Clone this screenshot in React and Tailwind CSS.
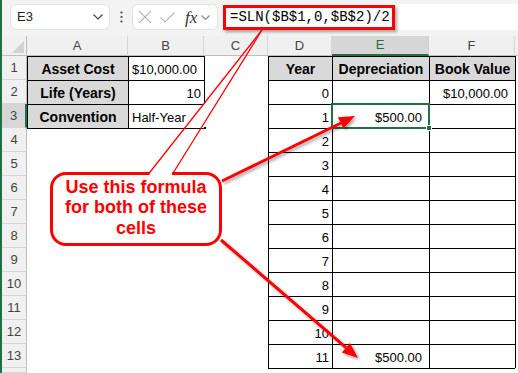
import React from 'react';

const COLS = ['A', 'B', 'C', 'D', 'E', 'F'];

const t1 = (r, c) => r >= 1 && r <= 3 && c >= 0 && c <= 1;
const t2 = (r, c) => r >= 1 && r <= 13 && c >= 3 && c <= 5;
const inT = (r, c) => t1(r, c) || t2(r, c);

const data = {
  '1-0': { v: 'Asset Cost', h: true },
  '2-0': { v: 'Life (Years)', h: true },
  '3-0': { v: 'Convention', h: true },
  '1-1': { v: '$10,000.00', a: 'cur' },
  '2-1': { v: '10', a: 'num' },
  '3-1': { v: 'Half-Year', a: 'left' },
  '1-3': { v: 'Year', h: true },
  '1-4': { v: 'Depreciation', h: true },
  '1-5': { v: 'Book Value', h: true },
  '2-5': { v: '$10,000.00', a: 'cur' },
  '3-4': { v: '$500.00', a: 'cur' },
  '13-4': { v: '$500.00', a: 'cur' },
};
for (let r = 2; r <= 13; r++) data[`${r}-3`] = { v: String(r - 2), a: 'num' };

function Cell({ r, c }) {
  const d = data[`${r}-${c}`];
  const noLeft = r === 3 && c === 2;
  const bl = !noLeft && (inT(r, c) || inT(r, c - 1));
  const bt = inT(r, c) || inT(r - 1, c);
  let cls = 'relative flex min-w-0 overflow-visible whitespace-nowrap text-[13px] text-black ';
  cls += bl ? 'border-l border-l-black ' : '';
  cls += bt ? 'border-t border-t-black ' : '';
  if (d && d.h) cls += 'bg-[#d9d9d9] font-bold text-[14px] items-center justify-center pt-[2px] ';
  else if (d && d.a === 'cur') cls += 'items-center justify-end pr-[7px] pt-[2px] ';
  else if (d && d.a === 'num') cls += 'items-center justify-end pr-[3px] pt-[2px] ';
  else cls += 'items-center justify-start pl-[3px] pt-[2px] ';
  return (
    <div className={cls}>
      {d ? d.v : ''}
      {noLeft ? <div className="absolute left-0 bottom-[-1px] h-[2px] w-[2px] bg-black" /> : null}
    </div>
  );
}

export default function App() {
  const rows = [];
  for (let r = 1; r <= 14; r++) {
    const sel = r === 3;
    rows.push(
      <div
        key={`rh${r}`}
        className={
          'flex items-center justify-center text-[13px] text-[#444] border-b border-b-[#d8d8d8] ' +
          (sel ? 'bg-[#d6d6d6] border-r-2 border-r-[#1e7145]' : 'bg-[#f0f0f0] border-r border-r-[#bdbdbd]')
        }
      >
        {r <= 13 ? r : ''}
      </div>
    );
    for (let c = 0; c <= 6; c++) {
      if (c === 6) {
        const bl = inT(r, 5);
        rows.push(<div key={`x${r}`} className={bl ? 'border-l border-l-black' : ''} />);
      } else {
        rows.push(<Cell key={`${r}-${c}`} r={r} c={c} />);
      }
    }
  }

  return (
    <div className="relative flex w-[518px] h-[373px] overflow-hidden bg-white font-['Liberation_Sans',Arial,sans-serif]">
      <div className="w-[2px] h-full bg-[#1e7145] shrink-0" />
      <div className="flex flex-col flex-1 min-w-0">
        {/* Formula bar */}
        <div className="flex h-[36px] shrink-0 items-start bg-[#f3f3f3] pt-[4px] pl-[8px]">
          <div className="flex h-[26px] w-[100px] items-center justify-between rounded-[6px] border border-[#e2e2e2] bg-white pl-[6px] pr-[6px]">
            <span className="text-[13px] text-[#222]">E3</span>
            <svg width="10" height="6" viewBox="0 0 10 6">
              <polyline points="0.5,0.5 5,5 9.5,0.5" fill="none" stroke="#444" strokeWidth="1.2" />
            </svg>
          </div>
          <div className="flex h-[26px] w-[22px] items-center justify-center">
            <svg width="3" height="12" viewBox="0 0 3 12">
              <circle cx="1.5" cy="1.5" r="1.1" fill="#444" />
              <circle cx="1.5" cy="6" r="1.1" fill="#444" />
              <circle cx="1.5" cy="10.5" r="1.1" fill="#444" />
            </svg>
          </div>
          <div className="flex h-[26px] w-[86px] items-center rounded-[6px] border border-[#e2e2e2] bg-white pl-[5px]">
            <svg width="14" height="14" viewBox="0 0 14 14" className="mr-[8px]">
              <line x1="1" y1="1" x2="13" y2="13" stroke="#b5b5b5" strokeWidth="1.1" />
              <line x1="13" y1="1" x2="1" y2="13" stroke="#b5b5b5" strokeWidth="1.1" />
            </svg>
            <svg width="15" height="11" viewBox="0 0 15 11" className="mr-[10px]">
              <polyline points="0.5,5.5 5,10 14.5,0.5" fill="none" stroke="#b5b5b5" strokeWidth="1.1" />
            </svg>
            <span className="font-['Liberation_Serif',serif] italic text-[17px] leading-none text-[#333] mr-[4px]">fx</span>
            <svg width="9" height="5" viewBox="0 0 9 5">
              <polyline points="0.5,0.5 4.5,4.5 8.5,0.5" fill="none" stroke="#888" strokeWidth="1.1" />
            </svg>
          </div>
          <div className="ml-[5px] flex h-[26px] flex-1 items-center rounded-l-[4px] bg-white pl-[7px]">
            <span className="font-['Liberation_Mono',monospace] text-[14px] text-black">=SLN($B$1,0,$B$2)/2</span>
          </div>
        </div>

        {/* Sheet grid */}
        <div className="grid flex-1 grid-cols-[25px_101px_76px_64px_64px_97px_86px_1fr] grid-rows-[20px_repeat(13,24px)_1fr]">
          <div className="relative bg-[#f0f0f0] border-r border-r-[#bdbdbd] border-b border-b-[#bdbdbd]">
            <svg width="12" height="12" viewBox="0 0 12 12" className="absolute right-[2px] bottom-[2px]">
              <polygon points="12,0 12,12 0,12" fill="#d2d2d2" />
            </svg>
          </div>
          {COLS.map((L) =>
            L === 'E' ? (
              <div
                key={L}
                className="flex items-center justify-center bg-[#d6d6d6] text-[13px] text-[#1e7145] border-r border-r-[#d0d0d0] border-b-2 border-b-[#1e7145]"
              >
                {L}
              </div>
            ) : (
              <div
                key={L}
                className="flex items-center justify-center bg-[#f0f0f0] text-[13px] text-[#444] border-r border-r-[#d6d6d6] border-b border-b-[#bdbdbd]"
              >
                {L}
              </div>
            )
          )}
          <div className="bg-[#f0f0f0] border-b border-b-[#bdbdbd]" />
          {rows}
        </div>
      </div>

      {/* Formula highlight box */}
      <div className="absolute left-[223px] top-[5px] h-[25px] w-[172px] border-[3px] border-[#ff0000] shadow-[2px_2px_3px_rgba(0,0,0,0.35)]" />

      {/* Selected cell E3 */}
      <div className="absolute left-[331px] top-[103px] h-[26px] w-[99px] border-2 border-[#1e7145]" />
      <div className="absolute left-[426px] top-[125px] h-[6px] w-[6px] bg-[#1e7145] border border-white" />

      {/* Callout */}
      <div className="absolute left-[50px] top-[172px] flex h-[74px] w-[172px] flex-col items-center justify-center rounded-[16px] border-[3px] border-[#ff0000] bg-white pb-[3px] text-center text-[18px] font-bold leading-[20.5px] text-[#ff0000]">
        <div>Use this formula</div>
        <div>for both of these</div>
        <div>cells</div>
      </div>

      <svg className="pointer-events-none absolute left-0 top-0" width="518" height="373" viewBox="0 0 518 373">
        <defs>
          <filter id="sh" x="-20%" y="-20%" width="140%" height="140%">
            <feDropShadow dx="2" dy="2" stdDeviation="1.5" floodColor="#000" floodOpacity="0.35" />
          </filter>
        </defs>
        <rect x="149.5" y="171" width="22.5" height="5" fill="#fff" />
        <line x1="148.5" y1="174" x2="262" y2="30" stroke="#ff0000" strokeWidth="1.3" />
        <line x1="172.5" y1="174" x2="262" y2="30" stroke="#ff0000" strokeWidth="1.3" />
        <g filter="url(#sh)">
          <line x1="222" y1="181" x2="341" y2="123" stroke="#ff0000" strokeWidth="3" />
          <polygon points="355,116 343.4,128.6 337.8,117.2" fill="#ff0000" />
          <line x1="221" y1="240" x2="346" y2="347.6" stroke="#ff0000" strokeWidth="3" />
          <polygon points="358,358 341.8,352.4 350,343" fill="#ff0000" />
        </g>
      </svg>
    </div>
  );
}
